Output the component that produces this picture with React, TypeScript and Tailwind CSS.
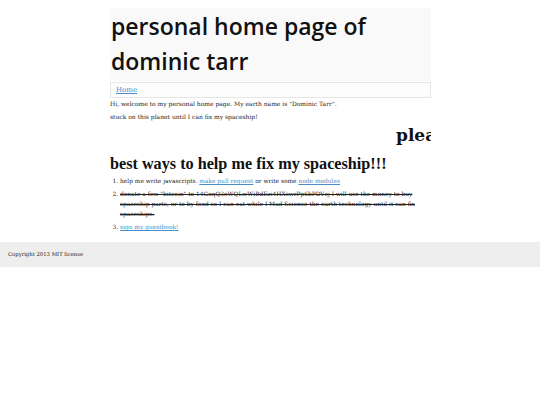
import React from "react";

export default function App() {
  const serif = { fontFamily: '"DejaVu Serif", Georgia, serif' } as React.CSSProperties;
  const times = { fontFamily: '"Liberation Serif", "Times New Roman", serif' } as React.CSSProperties;
  return (
    <div className="bg-white min-h-[405px] w-[540px] text-[#222]" style={serif}>
      <div className="pt-[8px] pl-[110px] w-[431px]">
        <div className="bg-[#f9f9f9] h-[73px] pl-[1px]">
          <h1 className="text-[23px] leading-[35px] text-[#111] font-semibold pt-[1px]" style={{ fontFamily: '"Open Sans", sans-serif' }}>
            personal home page of dominic tarr
          </h1>
        </div>
        <div className="mt-[1px] border border-[#e6e6e6] bg-[#fdfdfd] h-[16px] pl-[5px] text-[7px] leading-[14px]">
          <a className="text-[#4a8ec8] underline">Home</a>
        </div>
        <p className="text-[6px] leading-[9px] mt-[1px]">Hi, welcome to my personal home page. My earth name is "Dominic Tarr".</p>
        <p className="text-[6px] leading-[9px] mt-[4px]">stuck on this planet until I can fix my spaceship!</p>
        <div className="overflow-hidden whitespace-nowrap mt-[2px] h-[24px]">
          <span className="inline-block ml-[286px] text-[17px] leading-[24px] font-bold text-[#111]">please help me</span>
        </div>
        <h2 className="text-[16.2px] leading-[20px] font-bold text-[#111] mt-[7px]" style={times}>best ways to help me fix my spaceship!!!</h2>
        <ol className="list-decimal pl-[10px] mt-[2px] text-[5.9px] leading-[10px]">
          <li>help me write javascripts. <a className="text-[#4a8ec8] underline">make pull request</a> or write some <a className="text-[#4a8ec8] underline">node modules</a></li>
          <li className="mt-[3px] line-through pr-[10px]">donate a few "bitcoin" to 14GoqQ3eWQLwWiBdEzi4HXswrPp6bPDVcj I will use the money to buy spaceship parts, or to by food so I can eat while I Mad Science the earth technology until it can fix spaceships.</li>
          <li className="mt-[3px]"><a className="text-[#4a8ec8] underline">sign my guestbook!</a></li>
        </ol>
      </div>
      <div className="mt-[10px] bg-[#eeeeee] h-[25px] pl-[8px] text-[5.3px] leading-[25px]">Copyright 2013 MIT license</div>
    </div>
  );
}
